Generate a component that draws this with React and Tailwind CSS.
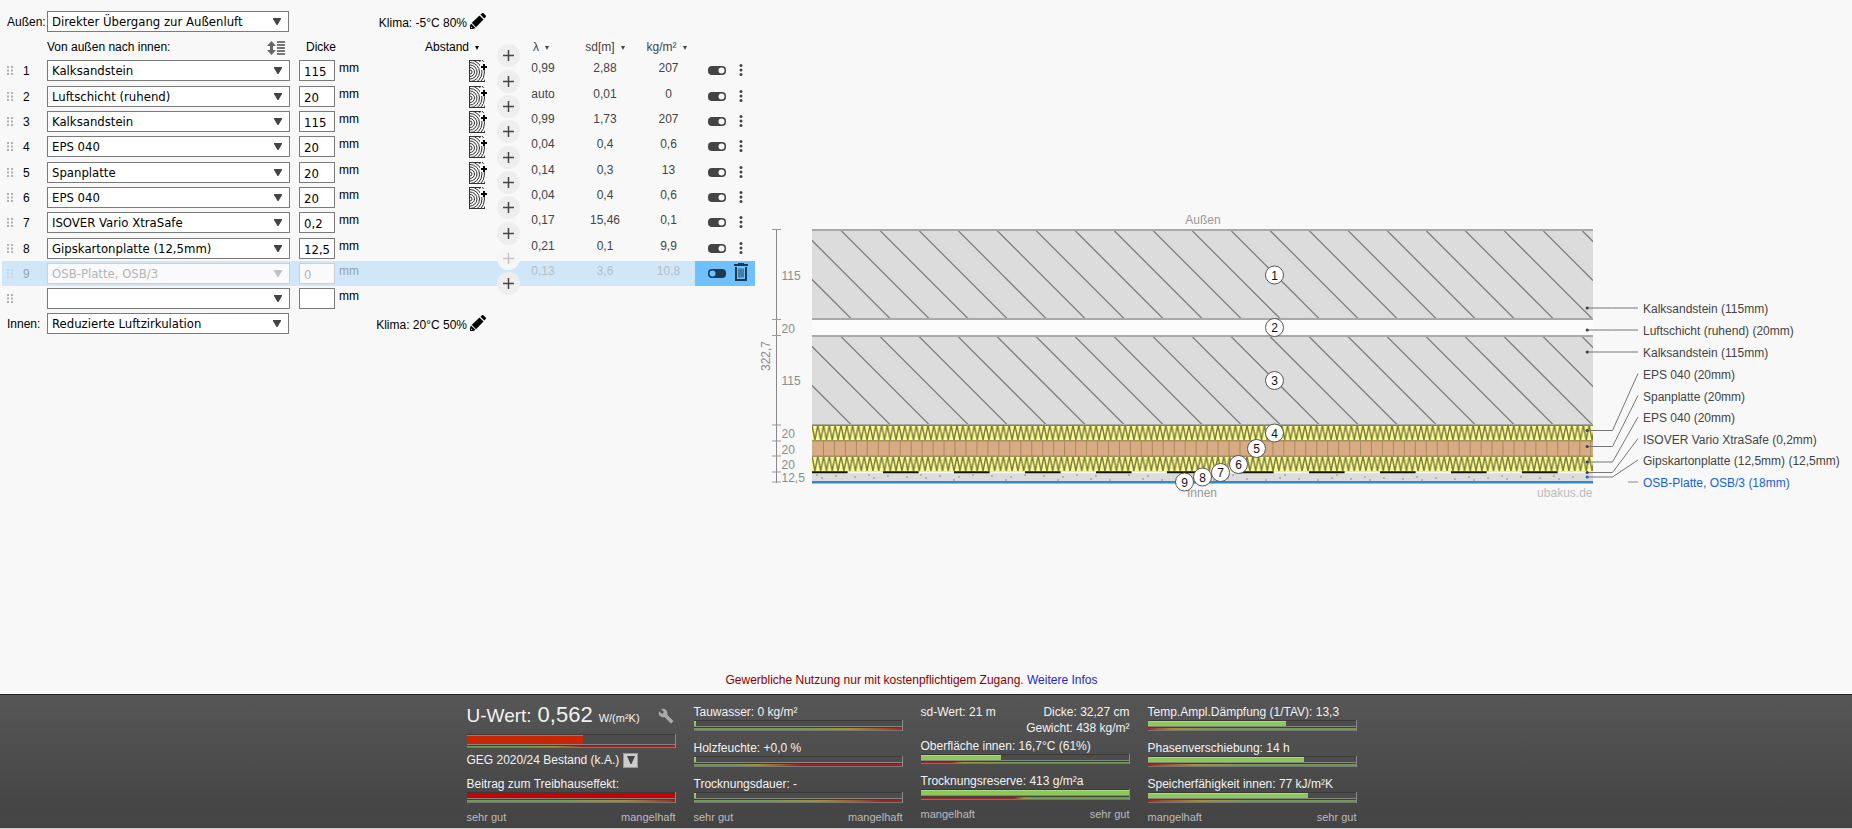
import React, { useState } from 'react';
import { MdBuild } from 'react-icons/md';

const LAYERS = [
  { name: 'Kalksandstein', d: '115', lambda: '0,99', sd: '2,88', kg: '207', wood: true },
  { name: 'Luftschicht (ruhend)', d: '20', lambda: 'auto', sd: '0,01', kg: '0', wood: true },
  { name: 'Kalksandstein', d: '115', lambda: '0,99', sd: '1,73', kg: '207', wood: true },
  { name: 'EPS 040', d: '20', lambda: '0,04', sd: '0,4', kg: '0,6', wood: true },
  { name: 'Spanplatte', d: '20', lambda: '0,14', sd: '0,3', kg: '13', wood: true },
  { name: 'EPS 040', d: '20', lambda: '0,04', sd: '0,4', kg: '0,6', wood: true },
  { name: 'ISOVER Vario XtraSafe', d: '0,2', lambda: '0,17', sd: '15,46', kg: '0,1' },
  { name: 'Gipskartonplatte (12,5mm)', d: '12,5', lambda: '0,21', sd: '0,1', kg: '9,9' },
  { name: 'OSB-Platte, OSB/3', d: '0', lambda: '0,13', sd: '3,6', kg: '10,8', off: true },
  { name: '', d: '', empty: true },
];

const CALLOUTS = [
  { text: 'Kalksandstein (115mm)', y: 308, ly: 308 },
  { text: 'Luftschicht (ruhend) (20mm)', y: 330, ly: 330 },
  { text: 'Kalksandstein (115mm)', y: 352, ly: 352 },
  { text: 'EPS 040 (20mm)', y: 430.5, ly: 373.5 },
  { text: 'Spanplatte (20mm)', y: 446.5, ly: 395.5 },
  { text: 'EPS 040 (20mm)', y: 462, ly: 417 },
  { text: 'ISOVER Vario XtraSafe (0,2mm)', y: 472.5, ly: 438.5 },
  { text: 'Gipskartonplatte (12,5mm) (12,5mm)', y: 477, ly: 460 },
];

const BADGES = [
  [1274.5, 275], [1274.5, 327.5], [1274.5, 380.5], [1274.5, 433], [1256.5, 448.5],
  [1238.5, 464.5], [1220.5, 472.5], [1202.5, 477], [1184.5, 482],
];

const TICKS = [229.5, 319.5, 335.5, 425, 441, 456, 472, 482];

const DIMS = [
  ['115', 279.5], ['20', 332.5], ['115', 384.5], ['20', 437.5], ['20', 453.5], ['20', 468.5], ['12,5', 482],
];

const FIELD = 'border text-[13px]';
const FIELD_ON = 'border-[#7b7b7b] bg-white text-black';
const FIELD_OFF = 'border-[#cfcfcf] bg-[#fafafa] text-[#b4b4b4]';
const TAHOMA = "font-['DejaVu_Sans_Condensed','Noto_Sans',sans-serif]";

function Combo({ label, value, options, dim, className }) {
  const [current, setCurrent] = useState(value);
  return (
    <div className={`relative h-[21px] ${className}`}>
      <select
        aria-label={label}
        value={current}
        onChange={e => setCurrent(e.target.value)}
        className={`h-full w-full appearance-none pt-px pl-1 leading-[18px] ${FIELD} ${TAHOMA} ${dim ? FIELD_OFF : FIELD_ON}`}
      >
        {options.map(o => <option key={o}>{o}</option>)}
      </select>
      <svg className="pointer-events-none absolute top-[7px] right-2" width="8" height="8" viewBox="0 0 8 8">
        <path d="M0 0h8v1L4.500 7h-1L0 1z" fill={dim ? '#c0c0c0' : '#444'} />
      </svg>
    </div>
  );
}

function WoodIcon() {
  return (
    <svg width="20" height="22" viewBox="0 0 20 22" fill="none">
      <clipPath id="wood"><rect width="16" height="22" /></clipPath>
      <g clipPath="url(#wood)" stroke="#333">
        {[2, 4.5, 7, 9.5, 12, 14.5, 17, 19.5].map(r => (
          <circle key={r} cx="1" cy="12" r={r} />
        ))}
        <path d="M.5 0v22M0 .5h12M0 21.500h16" />
      </g>
      <path d="M11 2h5v8h-5z" fill="#f8f8f8" />
      <path d="M15 4v6M12 7h6" stroke="#000" strokeWidth="2" />
    </svg>
  );
}

function PencilIcon() {
  return (
    <svg width="16" height="16" viewBox="0 0 16 16" className="-mt-1" fill="#000">
      <path d="M0 16v-3l1-2.500 4.500 4.500L3 16z" />
      <path d="M1.800 9.800L9.500 2.500l4 4-7.500 7.800z" />
      <path d="M10.500 1.700L12 .3q.8-.6 1.500 0L15.700 2.600q.6.700 0 1.400L14.400 5.600z" />
      <path d="M1 15l1.500-.3-1.200-1.200z" fill="#f8f8f8" />
    </svg>
  );
}

function GripIcon() {
  return (
    <svg width="6" height="9" viewBox="0 0 6 9" fill="#b0b0b0">
      <path d="M0 0h2v2H0zM4 0h2v2H4zM0 3.500h2v2H0zM4 3.500h2v2H4zM0 7h2v2H0zM4 7h2v2H4z" />
    </svg>
  );
}

function SortIcon() {
  return (
    <svg width="18" height="14" viewBox="0 0 18 14" fill="#666">
      <path d="M4.500 0L9 5H6v4h3l-4.500 5L0 9h3V5H0z" />
      <path d="M10 0h8v2h-8zM10 3h8v2h-8zM10 6h8v2h-8zM10 9h8v2h-8zM10 12h8v2h-8z" fill="#777" />
    </svg>
  );
}

function Toggle({ on }) {
  return (
    <svg width="18" height="9" viewBox="0 0 18 9">
      <rect width="18" height="9" rx="4" fill={on ? '#444' : '#1d3a50'} />
      <circle cx={on ? 13.5 : 4.5} cy="4.500" r="3" fill={on ? '#f8f8f8' : '#6fc0ff'} />
    </svg>
  );
}

function DotsIcon() {
  return (
    <svg width="4" height="12" viewBox="0 0 4 12" fill="#444">
      <circle cx="2" cy="1.500" r="1.500" />
      <circle cx="2" cy="6" r="1.500" />
      <circle cx="2" cy="10.500" r="1.500" />
    </svg>
  );
}

function TrashIcon() {
  return (
    <svg width="14" height="18" viewBox="0 0 14 18" fill="none" stroke="#1d3a50">
      <path d="M0 2h14M4 1h6" strokeWidth="2" />
      <path d="M2 4v13h10V4" strokeWidth="2" />
      <path d="M5 5.500v9M7 5.500v9M9 5.500v9" />
    </svg>
  );
}

function LayerRow({ layer, index }) {
  const { name, d, lambda, sd, kg, wood, off, empty } = layer;
  const faded = off ? 'text-[#b5bec5]' : 'text-[#444]';
  return (
    <tr className={`align-top leading-4 ${index % 3 === 0 ? 'h-[26px]' : 'h-[25px]'} ${off ? 'bg-[#cfe7f9]' : ''}`}>
      <td className={`pt-2 pl-[5px] ${off ? 'opacity-30' : ''}`}><GripIcon /></td>
      <td className={`pt-[5px] pl-[5px] ${off ? 'text-[#93a3ae]' : ''}`}>{empty ? '' : index + 1}</td>
      <td className="pt-0.5">
        <Combo label={`Material ${index + 1}`} value={name} options={[name]} dim={off} className="w-[243px]" />
      </td>
      <td className="pt-0.5">
        <input
          aria-label={`Dicke ${index + 1}`}
          defaultValue={d}
          className={`block h-[21px] w-9 pt-px pl-1 ${FIELD} ${TAHOMA} ${off ? FIELD_OFF : FIELD_ON}`}
        />
      </td>
      <td className={`pt-0.5 ${off ? 'text-[#93a3ae]' : ''}`}>mm</td>
      <td className="pt-0.5 pl-[44px]">
        {wood && <button className="block" aria-label="Gefach hinzufügen"><WoodIcon /></button>}
      </td>
      <td className="relative">
        <button
          aria-label="Schicht einfügen"
          className={`absolute -top-[14px] left-[7px] z-10 flex h-[23px] w-[23px] items-center justify-center rounded-full ${off ? 'bg-[#f6f6f6] text-[#c5c5c5]' : 'bg-[#eeeeee] text-[#444]'}`}
        >
          <svg width="11" height="11" viewBox="0 0 11 11" stroke="currentColor" strokeWidth="1.500">
            <path d="M5.500 0v11M0 5.500h11" />
          </svg>
        </button>
      </td>
      <td className={`pt-0.5 pr-2 text-center ${faded}`}>{lambda}</td>
      <td className={`pt-0.5 text-center ${faded}`}>{sd}</td>
      <td className={`pt-0.5 text-center ${faded}`}>{kg}</td>
      <td className={`pt-2 pl-[13px] ${off ? 'bg-[#6fc0ff]' : ''}`}>
        {!empty && <button className="block" aria-label="Schicht ein/aus"><Toggle on={!off} /></button>}
      </td>
      <td className={off ? 'bg-[#6fc0ff] pt-0.5' : 'pt-1.5 pl-[5px]'}>
        {!empty && <button className="block" aria-label="Menü">{off ? <TrashIcon /> : <DotsIcon />}</button>}
      </td>
    </tr>
  );
}

function Caret() {
  return <span className="ml-1.5 inline-block border-x-[2px] border-t-4 border-x-transparent border-t-current align-middle" />;
}

function ClimateRow({ label, value, climate }) {
  return (
    <div className="flex h-[21px] w-[486px] items-center pl-[7px]">
      <span className="w-10">{label}</span>
      <Combo label={label} value={value} options={[value]} className="w-[242px]" />
      <button className="ml-auto flex items-center gap-[3px] pt-0.5">
        {climate}
        <PencilIcon />
      </button>
    </div>
  );
}

function LayerTable() {
  return (
    <section className="w-[755px] shrink-0 pt-[11px] text-xs text-black">
      <ClimateRow label="Außen:" value="Direkter Übergang zur Außenluft" climate="Klima: -5°C 80%" />
      <table className="ml-0.5 w-[753px] table-fixed">
        <colgroup>
          <col className="w-[16px]" />
          <col className="w-[29px]" />
          <col className="w-[252px]" />
          <col className="w-[40px]" />
          <col className="w-[86px]" />
          <col className="w-[65px]" />
          <col className="w-[36px]" />
          <col className="w-[42px]" />
          <col className="w-[74px]" />
          <col className="w-[53px]" />
          <col className="w-[39px]" />
          <col className="w-[21px]" />
        </colgroup>
        <thead>
          <tr className="h-[26px] text-left *:pt-1 *:font-normal">
            <th />
            <th />
            <th>
              <div className="flex items-center justify-between pr-[14px]">
                Von außen nach innen:
                <button aria-label="Sortieren" className="mt-0.5"><SortIcon /></button>
              </div>
            </th>
            <th className="pl-[7px]">Dicke</th>
            <th />
            <th className="whitespace-nowrap">Abstand<Caret /></th>
            <th />
            <th className="pr-3 text-center text-[#444]">λ<Caret /></th>
            <th className="text-center text-[#444]">sd[m]<Caret /></th>
            <th className="pr-1 text-center whitespace-nowrap text-[#444]">kg/m²<Caret /></th>
            <th />
            <th />
          </tr>
        </thead>
        <tbody>
          {LAYERS.map((layer, i) => <LayerRow key={i} layer={layer} index={i} />)}
        </tbody>
      </table>
      <div className="pt-px">
        <ClimateRow label="Innen:" value="Reduzierte Luftzirkulation" climate="Klima: 20°C 50%" />
      </div>
    </section>
  );
}

function Brick({ y }) {
  const lines = [];
  for (let x = 762; x < 1593; x += 39) lines.push(x);
  return (
    <svg x="812" y={y} width="781" height="91" viewBox={`812 ${y} 781 91`}>
      <rect x="812" y={y} width="781" height="91" fill="#dcdcdc" />
      {lines.map(x => (
        <path key={x} d={`M${x + 0.5} ${y + 1}l90 90`} stroke="#808080" strokeWidth="1.300" />
      ))}
      <path d={`M812 ${y + 1}h781M812 ${y + 90}h781`} stroke="#a9a9a9" strokeWidth="2" />
    </svg>
  );
}

function Section() {
  const joints = [];
  for (let x = 823.5; x < 1593; x += 10.96) joints.push(x);
  const specks = [];
  for (let i = 0; i < 62; i++) specks.push([816 + ((i * 137) % 770), 474 + ((i * 5) % 6)]);
  return (
    <svg
      className="mt-[200px] shrink-0 font-['Liberation_Sans',Arial,sans-serif] text-xs"
      width="1097" height="310" viewBox="755 200 1097 310"
    >
      <defs>
        <pattern id="zig" x="812" y="425" width="5.800" height="31" patternUnits="userSpaceOnUse">
          <rect width="6" height="31" fill="#ffff8c" />
          <path d="M0 0L2.900 15L5.800 0M0 31L2.900 16L5.800 31" stroke="#77774a" fill="none" strokeWidth="1.400" />
        </pattern>
        <pattern id="zig2" x="812" y="456" width="5.800" height="16" patternUnits="userSpaceOnUse">
          <rect width="6" height="16" fill="#ffff8c" />
          <path d="M0 0L2.900 15L5.800 0" stroke="#77774a" fill="none" strokeWidth="1.400" />
        </pattern>
      </defs>

      {/* dimension axis */}
      <path d="M776.500 229v254" stroke="#888" />
      {TICKS.map(y => <path key={y} d={`M772 ${y}h9`} stroke="#999" />)}
      <g fill="#8c8c8c">
        {DIMS.map(([t, y], i) => <text key={i} x="781.500" y={y}>{t}</text>)}
        <text transform="translate(770 371) rotate(-90)">322,7</text>
      </g>

      {/* layers */}
      <Brick y={229} />
      <rect x="812" y="320" width="781" height="15" fill="#fcfcfc" />
      <Brick y={335} />
      <rect x="812" y="425" width="781" height="16" fill="url(#zig)" />
      <rect x="812" y="456" width="781" height="15" fill="url(#zig2)" />
      <rect x="812" y="441" width="781" height="15" fill="#d9ab84" />
      {joints.map(x => <path key={x} d={`M${x} 441v15`} stroke="#a58a5c" />)}
      <path d="M812 425.500h781" stroke="#808070" />
      <path d="M812 440.700h781M812 456.300h781" stroke="#a0925c" strokeWidth="1.500" />
      <rect x="812" y="471" width="781" height="11" fill="#dcdcdc" />
      <path d="M812 472.500h781" stroke="#f4f4f4" strokeWidth="1.500" />
      <path d="M812 472.300h781" stroke="#151515" strokeWidth="2" strokeDasharray="35.600 35.400" />
      {specks.map(([x, y], i) => <rect key={i} x={x} y={y} width="2" height="2" fill="#b4b4b4" />)}
      <rect x="812" y="481" width="781" height="2.500" fill="#3289cb" />

      <g fill="#999" textAnchor="middle">
        <text x="1203" y="224">Außen</text>
        <text x="1202" y="497">Innen</text>
        <text x="1592.500" y="497" textAnchor="end" fill="#bbb">ubakus.de</text>
      </g>

      {/* layer numbers */}
      {BADGES.map(([x, y], i) => (
        <g key={i}>
          <circle cx={x} cy={y} r="9" fill="#fff" stroke="#555" />
          <text x={x} y={y + 4.5} textAnchor="middle" fill="#111">{i + 1}</text>
        </g>
      ))}

      {/* callouts */}
      {CALLOUTS.map((c, i) => (
        <g key={i}>
          <path d={`M1587 ${c.y}H1612.500L1638 ${c.ly}`} stroke="#777" fill="none" />
          <circle cx="1587.200" cy={c.y} r="1.600" fill={i === 7 ? '#1560e0' : '#444'} />
          <text x="1643" y={c.ly + 5} fill="#444">{c.text}</text>
        </g>
      ))}
      <path d="M1628 482h10" stroke="#888" />
      <text x="1643" y="487" fill="#1560e0">OSB-Platte, OSB/3 (18mm)</text>
    </svg>
  );
}

function Bar({ value, color, scale, tall, slim }) {
  return (
    <div className="border-r border-[#8a8a8a]">
      <div className={`border-t border-b border-t-[#3a3a3a] border-b-[#858585] bg-[#4c4c4c] ${tall ? 'h-[11px]' : 'h-[7px]'}`}>
        <div className={`h-full border-t ${color}`} style={{ width: `${value}%` }} />
      </div>
      <div className="h-px bg-[#3f3f3f]" />
      <div className={`border-b border-[#777] ${scale} ${slim ? 'h-0.5' : 'h-[3px]'}`} />
    </div>
  );
}

function Meter({ label, className, ...bar }) {
  return (
    <div className={className}>
      <div className="whitespace-nowrap leading-4">{label}</div>
      <Bar {...bar} />
    </div>
  );
}

function Legend({ left, right, className }) {
  return (
    <div className={`flex justify-between text-[11px] leading-4 text-[#bbb] ${className}`}>
      <span>{left}</span>
      <span>{right}</span>
    </div>
  );
}

const GREEN = 'bg-[#8cc85a] border-[#a8d880]';

function ResultBar() {
  return (
    <footer className="border-t border-b border-t-[#222] border-b-[#ccc] bg-gradient-to-b from-[#565656] to-[#434343] pt-[9px] pb-[3px] text-xs text-[#f2f2f2]">
      <div className="flex items-start justify-center gap-[18px] pr-[29px]">
        <div className="w-[209px]">
          <div className="flex h-[22px] items-baseline whitespace-nowrap leading-[22px]">
            <span className="text-[19px]">U-Wert:</span>
            <span className="ml-1.5 text-[22px]">0,562</span>
            <span className="ml-1.5 text-[11px]">W/(m²K)</span>
            <button aria-label="Einstellungen" className="mt-1 mr-0.5 ml-auto self-start text-[#aaa]"><MdBuild size={16} /></button>
          </div>
          <div className="mt-2">
            <Bar value={56} color="bg-[#c92600] border-[#e06040]" tall slim scale="bg-linear-to-r from-[#6f9a50] from-25% via-[#a5902a] via-42% to-[#a02020] to-55%" />
          </div>
          <div className="mt-1 flex items-center gap-1 leading-4">
            GEG 2020/24 Bestand (k.A.)
            <button aria-label="Anforderung wählen" className="flex h-[15px] w-[15px] items-center justify-center border border-[#999] bg-[#ccc]">
              <svg width="8" height="8" viewBox="0 0 8 8"><path d="M0 0h8L4.500 8h-1z" fill="#444" /></svg>
            </button>
          </div>
          <Meter label="Beitrag zum Treibhauseffekt:" className="mt-2" value={100} color="bg-[#c80000] border-[#c80000]" scale="bg-linear-to-r from-[#6f9a50] from-45% via-[#a5902a] via-75% to-[#a02020]" />
          <Legend left="sehr gut" right="mangelhaft" className="mt-1.5" />
        </div>

        <div className="w-[209px]">
          <div className="space-y-[9px]">
            <Meter label="Tauwasser: 0 kg/m²" value={1} color={GREEN} scale="bg-linear-to-r from-[#6f9a50] from-50% via-[#a5902a] via-75% to-[#a02020]" />
            <Meter label="Holzfeuchte: +0,0 %" value={1} color={GREEN} scale="bg-linear-to-r from-[#6f9a50] from-20% via-[#a5902a] via-30% to-[#a02020] to-50%" />
            <Meter label="Trocknungsdauer: -" value={1} color={GREEN} scale="bg-linear-to-r from-[#6f9a50] from-35% via-[#a5902a] via-60% to-[#a02020] to-90%" />
          </div>
          <Legend left="sehr gut" right="mangelhaft" className="mt-1.5" />
        </div>

        <div className="w-[209px]">
          <div className="flex justify-between leading-4">
            <span>sd-Wert: 21 m</span>
            <span className="text-right">Dicke: 32,27 cm<br />Gewicht: 438 kg/m²</span>
          </div>
          <div className="mt-0.5 space-y-[9px]">
            <Meter label="Oberfläche innen: 16,7°C (61%)" value={38.5} color={GREEN} slim scale="bg-linear-to-r from-[#a02020] from-15% via-[#a5902a] via-20% to-[#6f9a50] to-45%" />
            <Meter label="Trocknungsreserve: 413 g/m²a" value={100} color={GREEN} scale="bg-linear-to-r from-[#a02020] from-45% via-[#a5902a] via-50% to-[#6f9a50] to-55%" />
          </div>
          <Legend left="mangelhaft" right="sehr gut" className="mt-1.5" />
        </div>

        <div className="w-[209px]">
          <div className="space-y-[9px]">
            <Meter label="Temp.Ampl.Dämpfung (1/TAV): 13,3" value={66.5} color={GREEN} scale="bg-linear-to-r from-[#a02020] via-[#a5902a] via-12% to-[#6f9a50] to-35%" />
            <Meter label="Phasenverschiebung: 14 h" value={75} color={GREEN} scale="bg-linear-to-r from-[#a02020] via-[#a5902a] via-22% to-[#6f9a50] to-45%" />
            <Meter label="Speicherfähigkeit innen: 77 kJ/m²K" value={77} color={GREEN} scale="bg-linear-to-r from-[#a02020] via-[#a5902a] via-25% to-[#6f9a50] to-50%" />
          </div>
          <Legend left="mangelhaft" right="sehr gut" className="mt-1.5" />
        </div>
      </div>
    </footer>
  );
}

export default function App() {
  return (
    <div className="flex min-h-screen flex-col bg-[#f8f8f8] font-['Liberation_Sans',Arial,sans-serif]">
      <main className="flex flex-1 items-start">
        <LayerTable />
        <Section />
      </main>
      <p className="pr-[29px] pb-1.5 text-center text-xs text-[#8b0000]">
        Gewerbliche Nutzung nur mit kostenpflichtigem Zugang.{' '}
        <a href="#infos" className="text-[#2424d8]">Weitere Infos</a>
      </p>
      <ResultBar />
    </div>
  );
}
